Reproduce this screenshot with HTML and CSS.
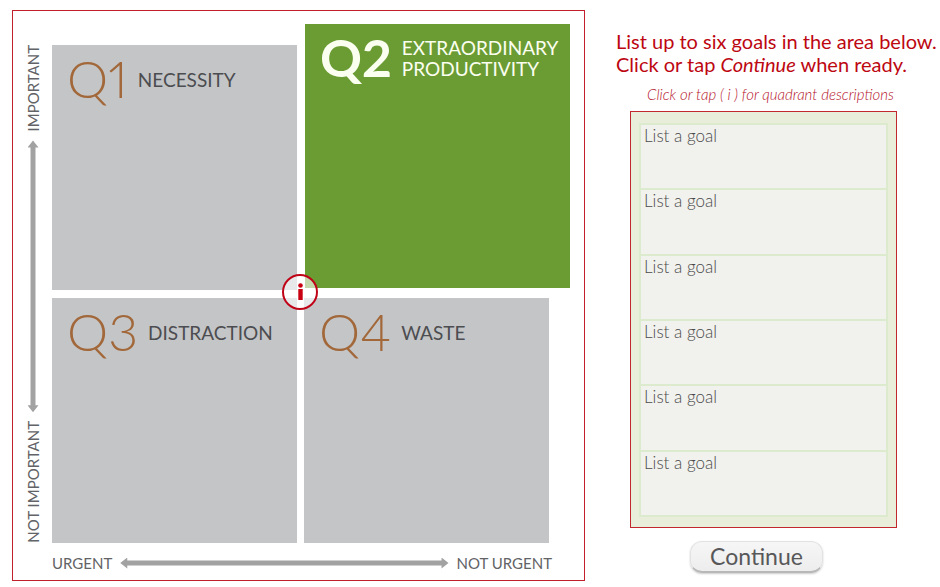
FILE: index.html
```html
<!DOCTYPE html>
<html lang="en">
<head>
<meta charset="utf-8">
<title>Time Matrix</title>
<link rel="stylesheet" href="styles.css">
</head>
<body>
<main class="page">
  <section class="matrix">
    <div class="axis axis-vertical">
      <span class="axis-label">IMPORTANT</span>
      <span class="arrow"></span>
      <span class="axis-label">NOT IMPORTANT</span>
    </div>
    <div class="quadrants">
      <article class="quadrant"><h2 class="code">Q1</h2><p class="name">NECESSITY</p></article>
      <article class="quadrant featured"><h2 class="code">Q2</h2><p class="name">EXTRAORDINARY<br>PRODUCTIVITY</p></article>
      <article class="quadrant"><h2 class="code">Q3</h2><p class="name">DISTRACTION</p></article>
      <article class="quadrant"><h2 class="code">Q4</h2><p class="name">WASTE</p></article>
      <button class="info" type="button" aria-label="Quadrant descriptions">
        <svg viewBox="0 0 36 36" aria-hidden="true">
          <circle cx="18" cy="18" r="17" fill="#fff" fill-opacity=".6" stroke="#c00418" stroke-width="2"/>
          <circle cx="18.500" cy="11.500" r="2.300" fill="#c90012"/>
          <path d="M16.300 15h4.400v11h-4.400z" fill="#c90012"/>
        </svg>
      </button>
    </div>
    <div class="axis axis-horizontal">
      <span class="axis-label">URGENT</span>
      <span class="arrow"></span>
      <span class="axis-label">NOT URGENT</span>
    </div>
  </section>
  <form class="goals">
    <h1 class="prompt">List up to six goals in the area below.<br>Click or tap <em>Continue</em> when ready.</h1>
    <p class="hint">Click or tap ( i ) for quadrant descriptions</p>
    <div class="panel">
      <div class="goal-list">
        <textarea class="goal" aria-label="Goal 1" placeholder="List a goal"></textarea>
        <textarea class="goal" aria-label="Goal 2" placeholder="List a goal"></textarea>
        <textarea class="goal" aria-label="Goal 3" placeholder="List a goal"></textarea>
        <textarea class="goal" aria-label="Goal 4" placeholder="List a goal"></textarea>
        <textarea class="goal" aria-label="Goal 5" placeholder="List a goal"></textarea>
        <textarea class="goal" aria-label="Goal 6" placeholder="List a goal"></textarea>
      </div>
    </div>
    <button class="continue" type="button">Continue</button>
  </form>
</main>
</body>
</html>
```
FILE: styles.css
```css
* { box-sizing: border-box; }

body {
  margin: 0;
  background: #fff;
  font-family: Lato, "Liberation Sans", sans-serif;
}

h1, h2, p { margin: 0; font-weight: 400; }

.page {
  display: grid;
  grid-template-columns: minmax(0, 573fr) minmax(0, 324fr);
  align-items: start;
  gap: 31px;
  padding: 10px 0 6px 12px;
}

.matrix {
  display: grid;
  grid-template-columns: 39px minmax(0, 1fr);
  padding: 34px 35px 0 0;
  border: 1px solid #c2202c;
}

.quadrants {
  position: relative;
  display: grid;
  grid-template-columns: repeat(2, minmax(0, 1fr));
  gap: 8px 7px;
}

.quadrant {
  display: flex;
  align-items: flex-start;
  gap: 10px;
  min-width: 0;
  aspect-ratio: 1;
  padding: 3px 15px;
  background: #c4c5c7;
}

.code {
  color: #a2683a;
  font-size: 52px;
  font-variant-numeric: proportional-nums;
  font-weight: 300;
  line-height: 60px;
}

.name {
  padding-top: 21px;
  color: #4c4d50;
  font-size: 19px;
  line-height: 21px;
}

.featured {
  aspect-ratio: auto;
  margin: -21px -21px 2px 1px;
  background: #6b9c34;
}

.featured .code { color: #fbfff0; font-weight: 700; }

.featured .name {
  padding-top: 10px;
  color: #fbfff0;
}

.info {
  position: absolute;
  top: 50%;
  left: 50%;
  width: 36px;
  height: 36px;
  margin: -20px 0 0 -19px;
  padding: 0;
  border: 0;
  border-radius: 50%;
  background: none;
}

.info svg { display: block; }

.axis {
  display: flex;
  align-items: center;
  color: #626366;
  font-size: 15px;
  line-height: 18px;
}

.axis-vertical {
  flex-direction: column;
  gap: 9px;
  padding-left: 1px;
}

.axis-vertical .axis-label {
  writing-mode: vertical-rl;
  transform: rotate(180deg);
}

.axis-horizontal {
  grid-column: 2;
  gap: 8px;
  height: 37px;
  padding-top: 3px;
  margin-right: -3px;
}

.arrow { flex: 1; background: #a2a2a2; }

.axis-vertical .arrow {
  width: 11px;
  clip-path: polygon(50% 0, 100% 7px, 8px 7px, 8px calc(100% - 7px), 100% calc(100% - 7px), 50% 100%, 0 calc(100% - 7px), 3px calc(100% - 7px), 3px 7px, 0 7px);
}

.axis-horizontal .arrow {
  height: 11px;
  clip-path: polygon(0 50%, 7px 0, 7px 3px, calc(100% - 7px) 3px, calc(100% - 7px) 0, 100% 50%, calc(100% - 7px) 100%, calc(100% - 7px) 8px, 7px 8px, 7px 100%);
}

.goals {
  display: flex;
  flex-direction: column;
  padding-top: 20px;
}

.prompt {
  color: #bd0711;
  font-size: 20px;
  line-height: 23px;
}

.hint {
  margin: 8px 0 7px 31px;
  color: #b5122a;
  font-size: 15px;
  font-style: italic;
  font-weight: 300;
  line-height: 20px;
}

.panel {
  margin: 0 43px 0 14px;
  padding: 11px 8px 10px;
  border: 1px solid #c1272d;
  background: #e9eedb;
}

.goal-list {
  display: grid;
  grid-auto-rows: 1fr;
  min-height: 394px;
  border: solid #dcebcd;
  border-width: 2px 2px 0;
}

.goal {
  display: block;
  width: 100%;
  height: 100%;
  padding: 1px 3px;
  border: 0;
  border-bottom: 2px solid #dcebcd;
  background: #f1f1ed;
  color: #4a4a4a;
  font: 300 17px/20px Lato, "Liberation Sans", sans-serif;
  resize: none;
}

.goal::placeholder { color: #4a4a4a; opacity: 1; }

.continue {
  align-self: center;
  margin: 13px 43px 0 0;
  padding: 0 19px;
  border: 1px solid #e2e2e2;
  border-bottom: 2px solid #b8b8b8;
  border-radius: 12px;
  background: linear-gradient(#f6f6f6, #ededed);
  box-shadow: 0 1px 2px #ccc;
  color: #58585a;
  font: 400 23px/29px Lato, "Liberation Sans", sans-serif;
}
```
